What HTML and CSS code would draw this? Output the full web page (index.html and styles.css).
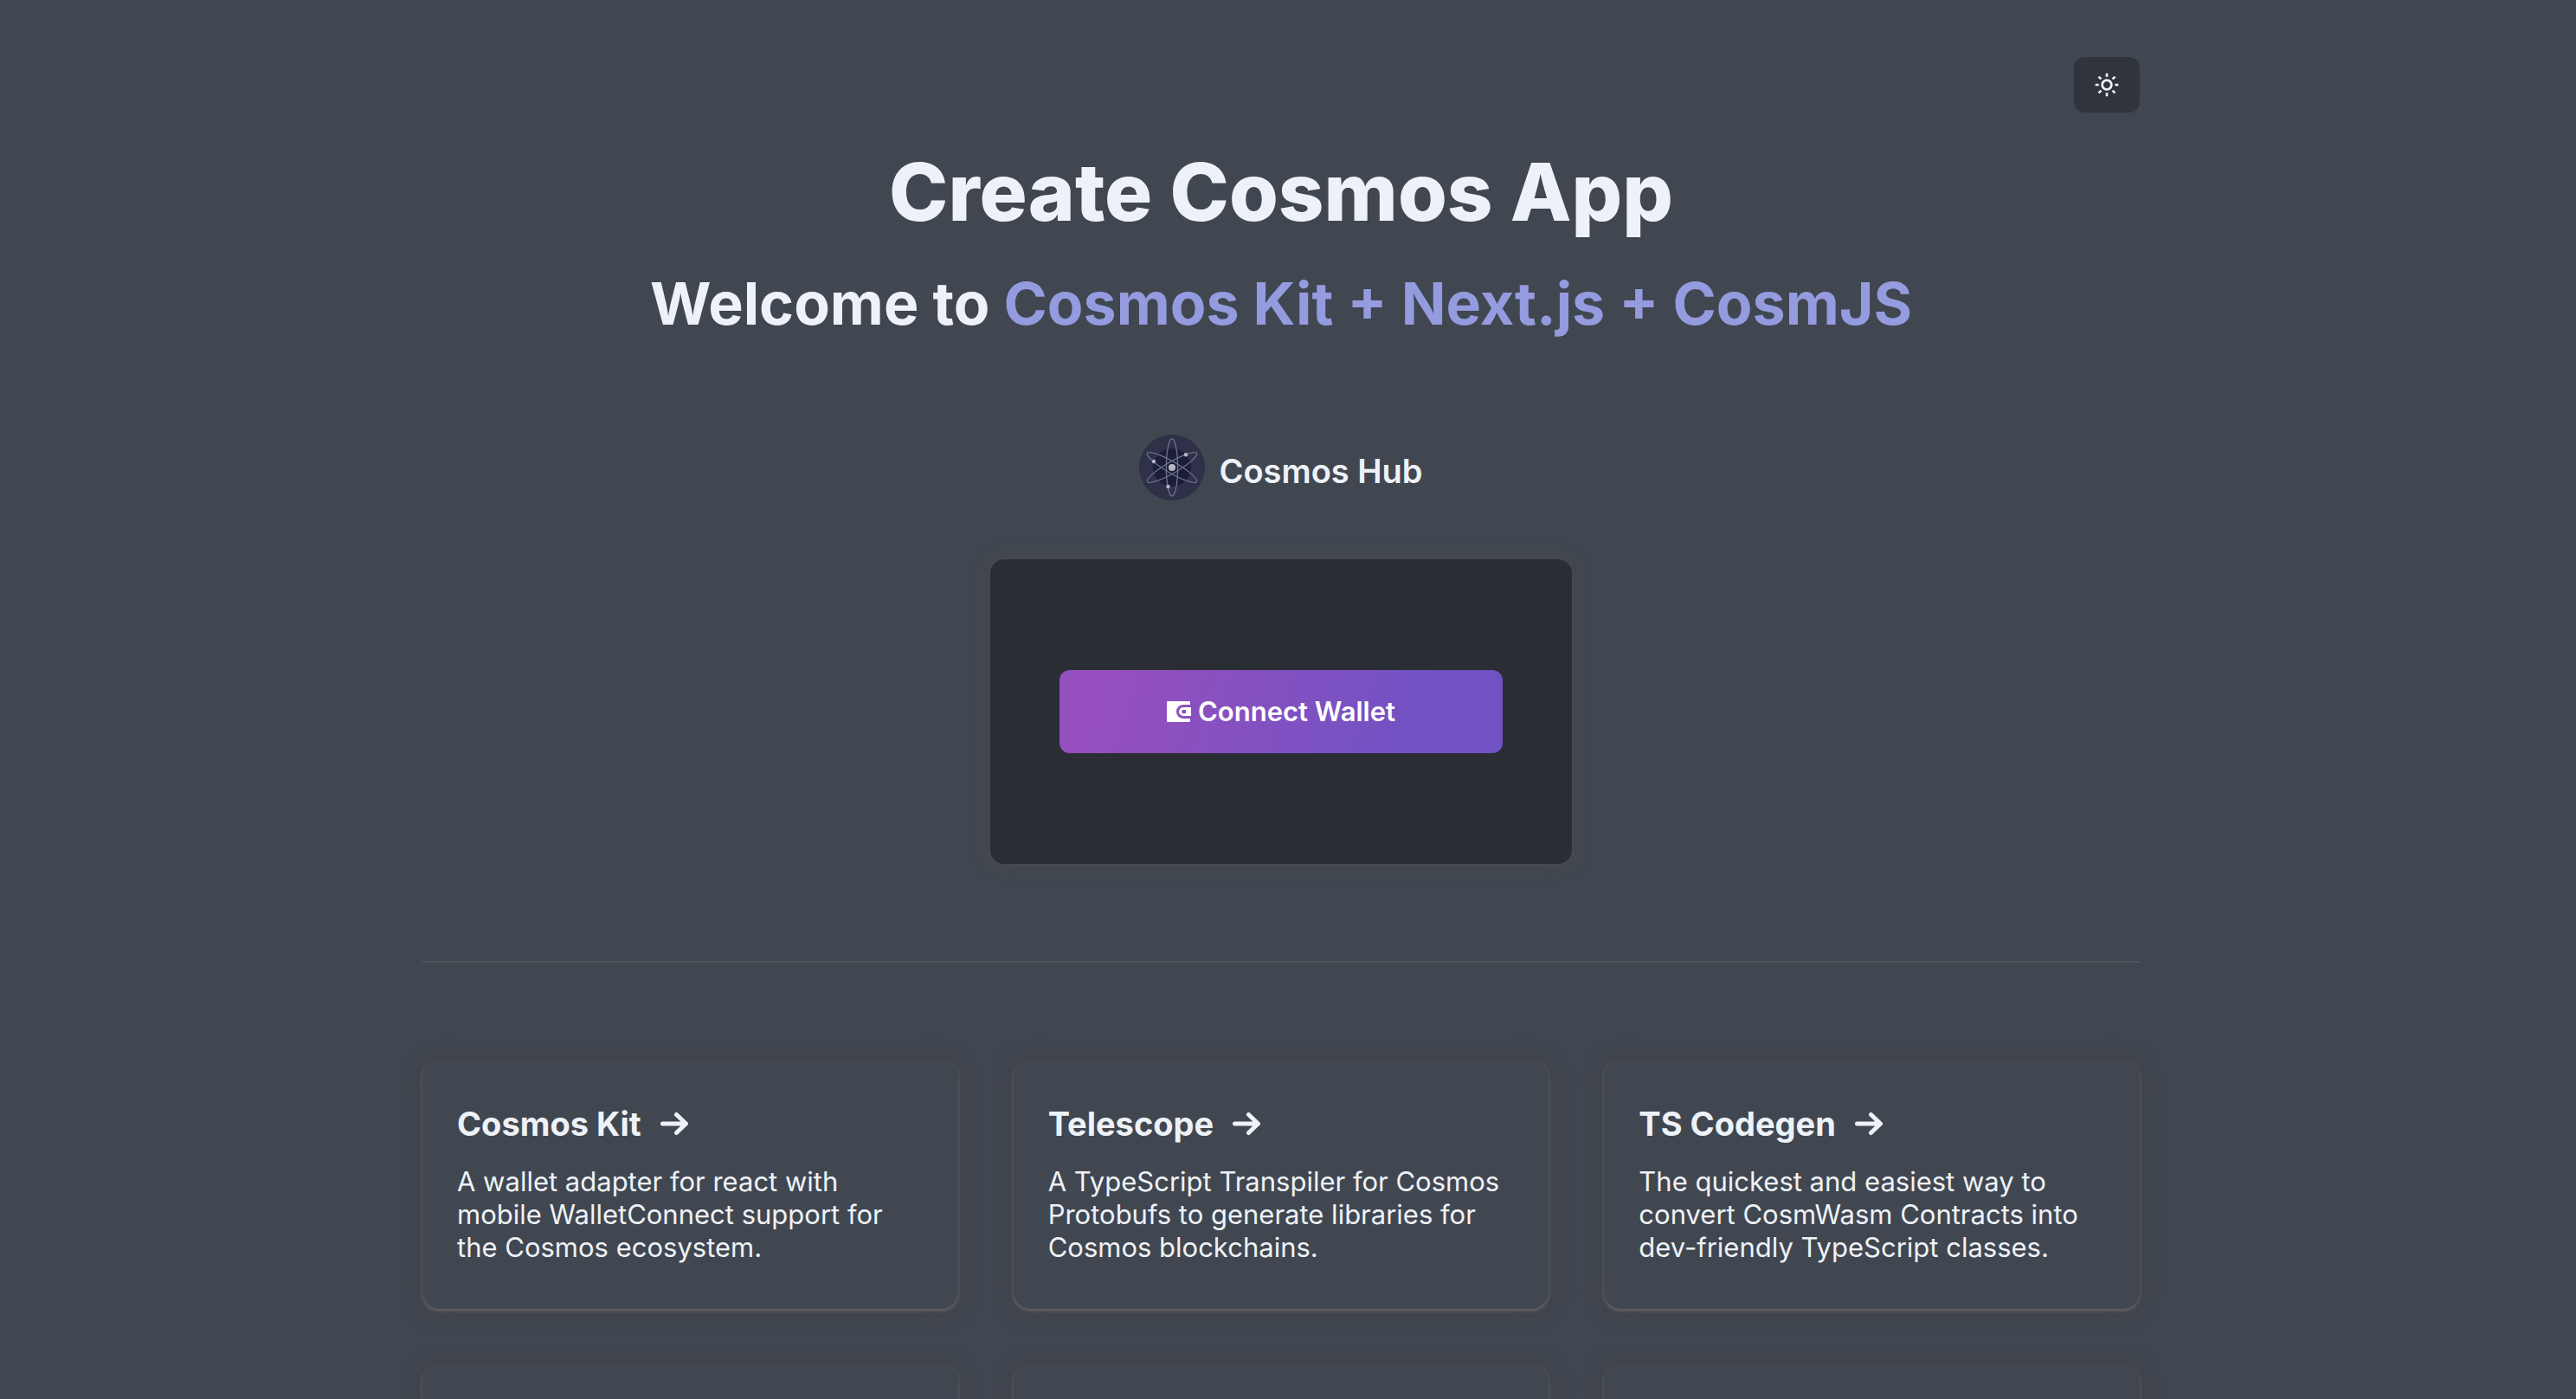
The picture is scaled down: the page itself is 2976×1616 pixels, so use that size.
FILE: index.html
```html
<!DOCTYPE html>
<html lang="en">
<head>
<meta charset="utf-8">
<title>Create Cosmos App</title>
<link rel="stylesheet" href="styles.css">
</head>
<body>
<div class="container">
  <header class="toolbar">
    <button class="theme-toggle" type="button" aria-label="Toggle color mode">
      <svg class="theme-icon" viewBox="0 0 24 24" aria-hidden="true"><path fill="currentColor" d="M6.995 12c0 2.761 2.246 5.007 5.007 5.007s5.007-2.246 5.007-5.007-2.246-5.007-5.007-5.007S6.995 9.239 6.995 12zm5.007-3.007c1.658 0 3.007 1.349 3.007 3.007s-1.349 3.007-3.007 3.007S8.995 13.658 8.995 12s1.349-3.007 3.007-3.007zM10.998 19h2v3h-2zm0-17h2v3h-2zm-9 9h3v2h-3zm17 0h3v2h-3zM4.219 18.363l2.12-2.122 1.415 1.414-2.12 2.122zM16.24 6.344l2.122-2.122 1.414 1.414-2.122 2.122zM6.342 7.759 4.22 5.637l1.415-1.414 2.12 2.122zm13.434 10.605-1.414 1.414-2.122-2.122 1.414-1.414z"/></svg>
    </button>
  </header>

  <main>
    <div class="hero">
      <h1 class="title">Create Cosmos App</h1>
      <h2 class="subtitle">Welcome to <span class="accent">Cosmos Kit + Next.js + CosmJS</span></h2>
    </div>

    <section class="wallet" aria-label="Wallet">
      <div class="chain">
        <svg class="chain-logo" viewBox="0 0 76 76" aria-hidden="true">
          <circle cx="38" cy="38" r="38" fill="#2e3148"/>
          <circle cx="38" cy="38" r="22" fill="#1b1e36"/>
          <g fill="none" stroke="#6f7390" stroke-width="1.3">
            <ellipse cx="38" cy="38" rx="6.6" ry="33"/>
            <ellipse cx="38" cy="38" rx="6.6" ry="33" transform="rotate(60 38 38)"/>
            <ellipse cx="38" cy="38" rx="6.6" ry="33" transform="rotate(-60 38 38)"/>
          </g>
          <g fill="#b7b9c8"><circle cx="38" cy="38" r="4"/><circle cx="54" cy="23.300" r="2.200"/><circle cx="17" cy="31" r="2.200"/><circle cx="33.500" cy="60" r="2.200"/></g>
        </svg>
        <span class="chain-name">Cosmos Hub</span>
      </div>
      <div class="wallet-panel">
        <button class="connect" type="button">
          <svg class="connect-icon" viewBox="0 0 28 24" aria-hidden="true"><path fill="currentColor" fill-rule="evenodd" d="M1 0H26Q27 0 27 1V4H19A8 8 0 0 0 19 20H27V23Q27 24 26 24H1Q0 24 0 23V1Q0 0 1 0ZM19 7H28V17H19A5 5 0 0 1 19 7ZM17.500 10V14H22V10Z"/></svg>
          <span>Connect Wallet</span>
        </button>
      </div>
    </section>

    <hr class="divider">

    <div class="cards">
      <a class="card" href="#cosmos-kit">
        <h2 class="card-title">Cosmos Kit <svg class="arrow" viewBox="0 0 32 32" aria-hidden="true"><path d="M2.500 16H29M18.500 5.500 29.500 16 18.500 26.500"/></svg></h2>
        <p class="card-text">A wallet adapter for react with mobile WalletConnect support for the Cosmos ecosystem.</p>
      </a>
      <a class="card" href="#telescope">
        <h2 class="card-title">Telescope <svg class="arrow" viewBox="0 0 32 32" aria-hidden="true"><path d="M2.500 16H29M18.500 5.500 29.500 16 18.500 26.500"/></svg></h2>
        <p class="card-text">A TypeScript Transpiler for Cosmos Protobufs to generate libraries for Cosmos blockchains.</p>
      </a>
      <a class="card" href="#ts-codegen">
        <h2 class="card-title">TS Codegen <svg class="arrow" viewBox="0 0 32 32" aria-hidden="true"><path d="M2.500 16H29M18.500 5.500 29.500 16 18.500 26.500"/></svg></h2>
        <p class="card-text">The quickest and easiest way to convert CosmWasm Contracts into dev-friendly TypeScript classes.</p>
      </a>
      <div class="card"></div>
      <div class="card"></div>
      <div class="card"></div>
    </div>
  </main>
</div>
</body>
</html>
```
FILE: styles.css
```css
*, *::before, *::after { box-sizing: border-box; }
html { height: 100%; overflow: hidden; }
body {
  height: 100%;
  margin: 0;
  padding-right: 16px;
  overflow: hidden;
  background: #414750;
  color: #eef2f8;
  font-family: Inter, "Liberation Sans", sans-serif;
  font-size: 31px;
  line-height: 38px;
}
h1, h2, p { margin: 0; }
button { border: 0; font: inherit; color: inherit; }
.container { max-width: 2048px; margin: 0 auto; padding: 66px 32px; }
.toolbar { display: flex; justify-content: flex-end; margin-bottom: 34px; }
.theme-toggle {
  display: flex; align-items: center; justify-content: center;
  width: 76px; height: 64px; padding: 0;
  border-radius: 12px; background: #30343d;
}
.theme-icon { width: 32px; height: 32px; }
.hero { text-align: center; }
.title { font-size: 92px; line-height: 116px; font-weight: 800; margin-bottom: 26px; }
.subtitle { font-size: 68px; line-height: 88px; font-weight: 700; }
.accent { color: #959bdf; }
.wallet { display: flex; flex-direction: column; align-items: center; margin-top: 108px; }
.chain { display: flex; align-items: center; gap: 16px; margin-bottom: 68px; }
.chain-logo { width: 76px; height: 76px; }
.chain-name { padding-top: 8px; font-size: 38px; line-height: 48px; font-weight: 600; }
.wallet-panel {
  display: flex; align-items: center; justify-content: center;
  width: 672px; height: 352px; padding: 80px;
  border-radius: 16px; background: #2b2d34;
  box-shadow: 0 0 4px #504e50, 0 0 20px #47464e;
}
.connect {
  display: flex; align-items: center; justify-content: center; gap: 8px;
  width: 100%; height: 96px; padding: 0;
  border-radius: 12px; color: #fff;
  background: linear-gradient(109deg, #954fbe 12%, #7052c4 82%);
  font-weight: 600;
}
.connect-icon { width: 28px; height: 24px; }
.divider { height: 2px; margin: 112px 0; border: 0; background: #53535b; }
.cards { display: grid; grid-template-columns: repeat(3, 1fr); gap: 64px; }
.card {
  min-height: 288px; padding: 50px 40px;
  border-radius: 20px; background: #414750;
  color: inherit; text-decoration: none;
  box-shadow: 0 2px 4px #6c6a66, 0 2px 24px #403e46;
}
.card-title {
  display: flex; align-items: center; gap: 22px;
  margin-bottom: 24px;
  font-size: 38px; line-height: 48px; font-weight: 700;
}
.arrow {
  width: 32px; height: 32px;
  fill: none; stroke: currentColor; stroke-width: 5;
  stroke-linecap: round; stroke-linejoin: round;
}
```
